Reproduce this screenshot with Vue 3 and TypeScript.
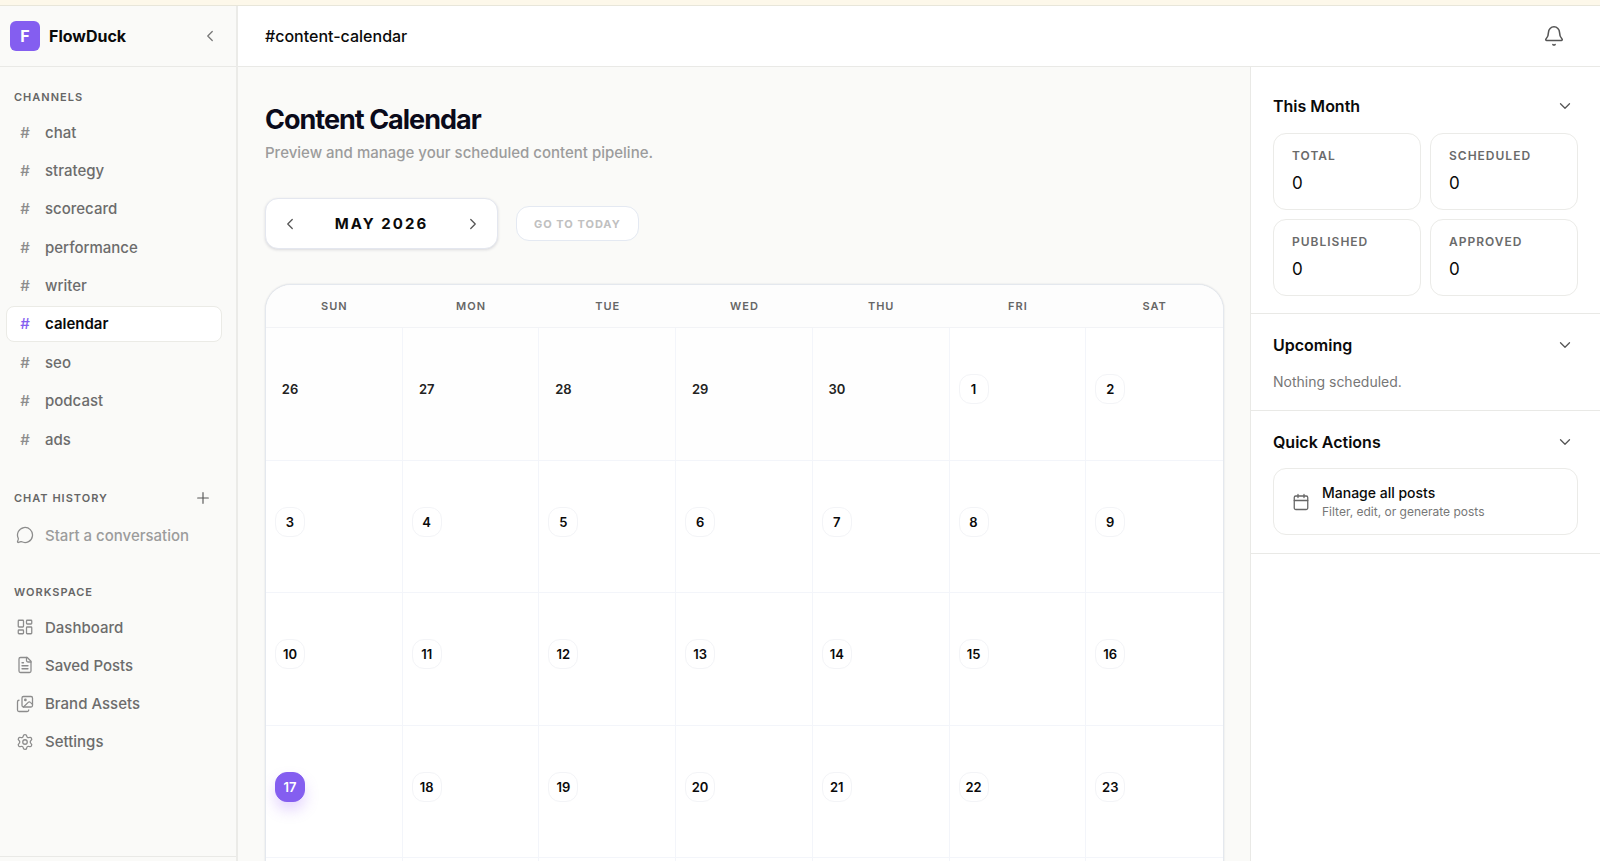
<script setup lang="ts">
import { ref } from 'vue'

interface Day {
  label: number
  outside: boolean
  today: boolean
}

const channels = ['chat', 'strategy', 'scorecard', 'performance', 'writer', 'calendar', 'seo', 'podcast', 'ads']
const activeChannel = ref('calendar')

const workspace = [
  { label: 'Dashboard', icon: 'dashboard' },
  { label: 'Saved Posts', icon: 'file' },
  { label: 'Brand Assets', icon: 'images' },
  { label: 'Settings', icon: 'settings' },
]

const stats = [
  { label: 'Total', value: 0 },
  { label: 'Scheduled', value: 0 },
  { label: 'Published', value: 0 },
  { label: 'Approved', value: 0 },
]

const weekdays = ['Sun', 'Mon', 'Tue', 'Wed', 'Thu', 'Fri', 'Sat']

function buildWeeks(year: number, month: number, todayDate: number): Day[][] {
  const offset = new Date(year, month, 1).getDay()
  const count = new Date(year, month + 1, 0).getDate()
  const total = Math.ceil((offset + count) / 7)
  return Array.from({ length: total }, (_, w) =>
    Array.from({ length: 7 }, (_, d) => {
      const n = w * 7 + d - offset + 1
      const outside = n < 1 || n > count
      return { label: new Date(year, month, n).getDate(), outside, today: !outside && n === todayDate }
    }),
  )
}

const weeks = buildWeeks(2026, 4, 17)
const open = ref({ month: true, upcoming: true, actions: true })
</script>

<template>
  <div class="app">
    <div class="banner"></div>
    <div class="shell">
      <aside class="sidebar">
        <div class="brand">
          <span class="logo">F</span>
          <span class="brand-name">FlowDuck</span>
          <button class="icon-btn collapse" type="button" aria-label="Collapse sidebar">
            <svg width="18" height="18" viewBox="0 0 24 24"><path d="m15 18-6-6 6-6" /></svg>
          </button>
        </div>

        <nav class="side-body">
          <h2 class="group-title">Channels</h2>
          <ul class="nav-list channels">
            <li v-for="c in channels" :key="c">
              <a href="#" class="nav-item" :class="{ active: c === activeChannel }" @click.prevent="activeChannel = c">
                <span class="nav-icon hash">#</span>{{ c }}
              </a>
            </li>
          </ul>

          <div class="group-head">
            <h2 class="group-title">Chat History</h2>
            <button class="icon-btn" type="button" aria-label="New chat">
              <svg width="16" height="16" viewBox="0 0 24 24"><path d="M4 12h16M12 4v16" /></svg>
            </button>
          </div>
          <a href="#" class="nav-item muted">
            <span class="nav-icon">
              <svg width="18" height="18" viewBox="0 0 24 24"><path d="M2.992 16.342a2 2 0 0 1 .094 1.167l-1.065 3.29a1 1 0 0 0 1.236 1.168l3.413-.998a2 2 0 0 1 1.099.092 10 10 0 1 0-4.777-4.719" /></svg>
            </span>Start a conversation
          </a>

          <h2 class="group-title workspace-title">Workspace</h2>
          <ul class="nav-list workspace">
            <li v-for="w in workspace" :key="w.label">
              <a href="#" class="nav-item">
                <span class="nav-icon">
                  <svg v-if="w.icon === 'dashboard'" width="18" height="18" viewBox="0 0 24 24">
                    <rect x="3" y="3" width="7" height="9" rx="1" /><rect x="14" y="3" width="7" height="5" rx="1" />
                    <rect x="14" y="12" width="7" height="9" rx="1" /><rect x="3" y="16" width="7" height="5" rx="1" />
                  </svg>
                  <svg v-else-if="w.icon === 'file'" width="18" height="18" viewBox="0 0 24 24">
                    <path d="M15 2H6a2 2 0 0 0-2 2v16a2 2 0 0 0 2 2h12a2 2 0 0 0 2-2V7Z" />
                    <path d="M14 2v4a2 2 0 0 0 2 2h4M10 9H8M16 13H8M16 17H8" />
                  </svg>
                  <svg v-else-if="w.icon === 'images'" width="18" height="18" viewBox="0 0 24 24">
                    <rect x="8" y="2" width="14" height="14" rx="2" />
                    <path d="M4 7a2 2 0 0 0-2 2v11a2 2 0 0 0 2 2h11a2 2 0 0 0 2-2" />
                    <path d="m10 16 6.300-6.200a2 2 0 0 1 2.800 0L22 12.500" />
                    <circle cx="12.500" cy="6.500" r="1" />
                  </svg>
                  <svg v-else width="18" height="18" viewBox="0 0 24 24">
                    <path d="M9.671 4.136a2.340 2.340 0 0 1 4.659 0 2.340 2.340 0 0 0 3.319 1.915 2.340 2.340 0 0 1 2.330 4.033 2.340 2.340 0 0 0 0 3.831 2.340 2.340 0 0 1-2.330 4.033 2.340 2.340 0 0 0-3.319 1.915 2.340 2.340 0 0 1-4.659 0 2.340 2.340 0 0 0-3.320-1.915 2.340 2.340 0 0 1-2.330-4.033 2.340 2.340 0 0 0 0-3.831A2.340 2.340 0 0 1 6.350 6.051a2.340 2.340 0 0 0 3.319-1.915" />
                    <circle cx="12" cy="12" r="3" />
                  </svg>
                </span>{{ w.label }}
              </a>
            </li>
          </ul>
        </nav>
        <div class="side-foot"></div>
      </aside>

      <div class="content">
        <header class="topbar">
          <h1 class="channel-name">#content-calendar</h1>
          <button class="icon-btn bell" type="button" aria-label="Notifications">
            <svg width="22" height="22" viewBox="0 0 24 24">
              <path d="M10.800 21.300a2 2 0 0 0 2.400 0" />
              <path d="M3.262 15.326A1 1 0 0 0 4 17h16a1 1 0 0 0 .740-1.673C19.410 13.956 18 12.499 18 8A6 6 0 0 0 6 8c0 4.499-1.411 5.956-2.738 7.326" />
            </svg>
          </button>
        </header>

        <div class="columns">
          <main class="main">
            <h2 class="page-title">Content Calendar</h2>
            <p class="subtitle">Preview and manage your scheduled content pipeline.</p>

            <div class="controls">
              <div class="month-switch">
                <button class="icon-btn" type="button" aria-label="Previous month">
                  <svg width="18" height="18" viewBox="0 0 24 24"><path d="m15 18-6-6 6-6" /></svg>
                </button>
                <span class="month">May 2026</span>
                <button class="icon-btn" type="button" aria-label="Next month">
                  <svg width="18" height="18" viewBox="0 0 24 24"><path d="m9 18 6-6-6-6" /></svg>
                </button>
              </div>
              <button class="today-btn" type="button" disabled>Go to today</button>
            </div>

            <div class="calendar">
              <table>
                <thead>
                  <tr><th v-for="d in weekdays" :key="d" scope="col">{{ d }}</th></tr>
                </thead>
                <tbody>
                  <tr v-for="(week, i) in weeks" :key="i">
                    <td v-for="(day, j) in week" :key="j" :class="{ outside: day.outside }">
                      <span class="day" :class="{ today: day.today }">{{ day.label }}</span>
                    </td>
                  </tr>
                </tbody>
              </table>
            </div>
          </main>

          <aside class="panel">
            <section class="summary">
              <button class="panel-head" type="button" :aria-expanded="open.month" @click="open.month = !open.month">
                This Month
                <svg width="18" height="18" viewBox="0 0 24 24"><path d="m6 9 6 6 6-6" /></svg>
              </button>
              <dl v-if="open.month" class="stats">
                <div v-for="s in stats" :key="s.label" class="stat">
                  <dt>{{ s.label }}</dt>
                  <dd>{{ s.value }}</dd>
                </div>
              </dl>
            </section>
            <section>
              <button class="panel-head" type="button" :aria-expanded="open.upcoming" @click="open.upcoming = !open.upcoming">
                Upcoming
                <svg width="18" height="18" viewBox="0 0 24 24"><path d="m6 9 6 6 6-6" /></svg>
              </button>
              <p v-if="open.upcoming" class="empty">Nothing scheduled.</p>
            </section>
            <section>
              <button class="panel-head" type="button" :aria-expanded="open.actions" @click="open.actions = !open.actions">
                Quick Actions
                <svg width="18" height="18" viewBox="0 0 24 24"><path d="m6 9 6 6 6-6" /></svg>
              </button>
              <a v-if="open.actions" href="#" class="action">
                <svg width="18" height="18" viewBox="0 0 24 24">
                  <path d="M8 2v4M16 2v4M3 10h18" /><rect x="3" y="4" width="18" height="18" rx="2" />
                </svg>
                <span class="action-text">
                  <span class="action-title">Manage all posts</span>
                  <span class="action-sub">Filter, edit, or generate posts</span>
                </span>
              </a>
            </section>
          </aside>
        </div>
      </div>
    </div>
  </div>
</template>

<style>
body {
  margin: 0;
}
</style>

<style scoped>
.app {
  display: flex;
  flex-direction: column;
  height: 100vh;
  overflow: hidden;
  font-family: Inter, "Liberation Sans", sans-serif;
  color: #0a0a0a;
  background: #fafaf8;
}
.app * {
  box-sizing: border-box;
}
h1, h2, p, ul, dl, dd {
  margin: 0;
  padding: 0;
}
ul {
  list-style: none;
}
button {
  font: inherit;
  color: inherit;
}
a {
  color: inherit;
  text-decoration: none;
}
svg {
  display: block;
  flex: none;
  fill: none;
  stroke: currentColor;
  stroke-width: 1.7;
  stroke-linecap: round;
  stroke-linejoin: round;
}
.icon-btn {
  display: flex;
  align-items: center;
  justify-content: center;
  width: 30px;
  height: 30px;
  padding: 0;
  border: 0;
  background: none;
  color: #555;
}
.banner {
  flex: none;
  height: 6px;
  background: #fdf8ea;
  border-bottom: 1px solid #e8e6da;
}
.shell {
  display: flex;
  flex: 1;
  min-height: 0;
}

.sidebar {
  display: flex;
  flex-direction: column;
  flex: none;
  width: 238px;
  border-right: 2px solid #ebebe8;
}
.brand {
  display: flex;
  align-items: center;
  flex: none;
  height: 61px;
  padding: 0 11px 0 10px;
  border-bottom: 1px solid #e9e9e6;
}
.logo {
  display: flex;
  align-items: center;
  justify-content: center;
  width: 30px;
  height: 30px;
  border-radius: 6px;
  background: #845ef0;
  color: #fff;
  font-size: 16px;
  font-weight: 700;
}
.brand-name {
  margin-left: 9px;
  font-size: 16px;
  font-weight: 700;
}
.collapse {
  margin-left: auto;
  color: #777;
}
.side-body {
  flex: 1;
  min-height: 0;
  padding: 23px 14px 0 6px;
}
.group-title {
  padding-left: 8px;
  font-size: 11px;
  line-height: 14px;
  font-weight: 600;
  letter-spacing: 1px;
  text-transform: uppercase;
  color: #666;
}
.nav-list {
  display: flex;
  flex-direction: column;
  justify-content: space-between;
}
.channels {
  min-height: 343px;
  margin-top: 10px;
}
.workspace {
  min-height: 151px;
  margin-top: 10px;
}
.nav-item {
  display: flex;
  align-items: center;
  height: 36px;
  padding: 0 9px;
  border: 1px solid transparent;
  border-radius: 8px;
  font-size: 15px;
  font-weight: 500;
  color: #6c6c6c;
}
.nav-icon {
  display: flex;
  justify-content: center;
  width: 18px;
  margin-right: 11px;
  color: #8c8c8c;
}
.nav-item.active {
  background: #fff;
  border-color: #ebebe6;
  color: #0a0a0a;
  font-weight: 600;
}
.nav-item.active .hash {
  color: #845ef0;
  font-weight: 500;
}
.nav-item.muted {
  color: #9c9c9c;
}
.group-head {
  display: flex;
  align-items: center;
  justify-content: space-between;
  margin: 26px 4px 4px 0;
}
.workspace-title {
  margin-top: 32px;
}
.side-foot {
  flex: none;
  height: 5px;
  border-top: 1px solid #e9e9e6;
}

.content {
  display: flex;
  flex-direction: column;
  flex: 1;
  min-width: 0;
}
.topbar {
  display: flex;
  align-items: center;
  justify-content: space-between;
  flex: none;
  height: 61px;
  padding: 0 31px 0 27px;
  background: #fff;
  border-bottom: 1px solid #e9e9e6;
}
.channel-name {
  font-size: 16px;
  font-weight: 500;
}
.columns {
  display: flex;
  flex: 1;
  min-height: 0;
}
.main {
  flex: 1;
  min-width: 0;
  padding: 35px 26px 0 27px;
  overflow-y: auto;
  scrollbar-width: none;
}
.page-title {
  font-size: 27px;
  line-height: 36px;
  font-weight: 700;
  letter-spacing: -1px;
  color: #0a0a1a;
}
.subtitle {
  margin-top: 3px;
  font-size: 15px;
  line-height: 24px;
  font-weight: 500;
  color: #9c9c9c;
}
.controls {
  display: flex;
  align-items: center;
  gap: 18px;
  margin: 33px 0 35px;
}
.month-switch {
  display: flex;
  align-items: center;
  justify-content: space-between;
  width: 233px;
  height: 51px;
  padding: 0 9px;
  border: 1px solid #e4e7ef;
  border-radius: 13px;
  background: #fff;
  box-shadow: 0 1px 3px rgb(20 20 60 / 14%);
}
.month {
  font-size: 15px;
  font-weight: 700;
  letter-spacing: 2px;
  text-transform: uppercase;
}
.today-btn {
  height: 35px;
  padding: 0 17px;
  border: 1px solid #e4e9f2;
  border-radius: 13px;
  background: #fff;
  font-size: 11px;
  font-weight: 700;
  letter-spacing: 1px;
  text-transform: uppercase;
  color: #c0c0c0;
}
.calendar {
  border: 1px solid #e4e8ee;
  border-radius: 26px;
  background: #fff;
  box-shadow: 0 0 2px rgb(20 30 60 / 14%);
  overflow: hidden;
}
table {
  width: 100%;
  height: 838px;
  border-spacing: 0;
  table-layout: fixed;
}
th {
  height: 43px;
  padding: 0;
  border-bottom: 1px solid #f2f3f6;
  background: #fdfdfd;
  font-size: 11px;
  font-weight: 600;
  letter-spacing: 1px;
  text-transform: uppercase;
  color: #666;
}
td {
  padding: 46px 9px 0;
  border-right: 1px solid #f3f5fa;
  border-bottom: 1px solid #f3f5fa;
  vertical-align: top;
}
td:last-child {
  border-right: 0;
}
.outside {
  background: #fefefe;
}
.day {
  display: flex;
  align-items: center;
  justify-content: center;
  width: 30px;
  height: 30px;
  border: 1px solid #f3f4f7;
  border-radius: 12px;
  font-size: 13px;
  font-weight: 600;
}
.outside .day {
  border-color: transparent;
  color: #222;
}
.day.today {
  border-color: #845ef0;
  background: #845ef0;
  color: #fff;
  box-shadow: 0 8px 14px rgb(150 90 250 / 25%);
}

.panel {
  flex: none;
  width: 350px;
  border-left: 1px solid #e9e9e6;
  background: #fff;
}
.panel section {
  padding: 21px 22px 18px;
  border-bottom: 1px solid #e9e9e6;
}
.panel .summary {
  padding: 29px 22px 17px;
}
.panel-head {
  display: flex;
  align-items: center;
  justify-content: space-between;
  width: 100%;
  height: 20px;
  padding: 0 4px 0 0;
  border: 0;
  background: none;
  font-size: 16px;
  font-weight: 600;
}
.panel-head svg {
  color: #555;
}
.stats {
  display: grid;
  grid-template-columns: 1fr 1fr;
  gap: 9px;
  margin-top: 17px;
}
.stat {
  height: 77px;
  padding: 14px 18px;
  border: 1px solid #ebebe8;
  border-radius: 13px;
}
.stat dt {
  font-size: 12px;
  line-height: 16px;
  font-weight: 600;
  letter-spacing: 1px;
  text-transform: uppercase;
  color: #6a6a6a;
}
.stat dd {
  margin-top: 8px;
  font-size: 17px;
  line-height: 22px;
}
.empty {
  margin-top: 17px;
  font-size: 14px;
  line-height: 20px;
  color: #777;
}
.action {
  display: flex;
  align-items: center;
  gap: 12px;
  height: 67px;
  margin-top: 16px;
  padding: 0 18px;
  border: 1px solid #ebebe8;
  border-radius: 13px;
}
.action svg {
  color: #666;
}
.action-text {
  display: flex;
  flex-direction: column;
}
.action-title {
  font-size: 14px;
  line-height: 20px;
  font-weight: 500;
}
.action-sub {
  font-size: 12px;
  line-height: 18px;
  color: #777;
}
</style>
